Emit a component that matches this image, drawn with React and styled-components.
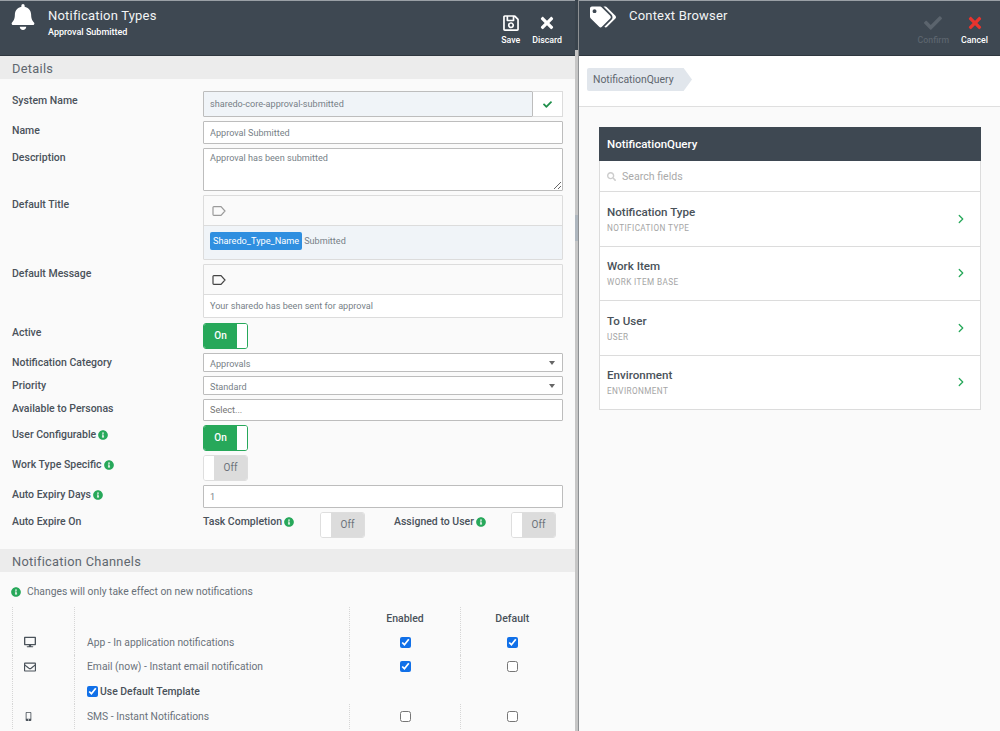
import React from 'react';
import styled, { createGlobalStyle } from 'styled-components';
import { FaBell, FaTags, FaRegSave, FaTimes, FaCheck, FaInfoCircle, FaDesktop, FaRegEnvelope, FaMobileAlt, FaSearch } from 'react-icons/fa';
import { ChevronRight } from 'lucide-react';

const GlobalStyle = createGlobalStyle`
  html, body {
    margin: 0;
    padding: 0;
    height: 731px;
    overflow: hidden;
    background: #fafafa;
    font-family: Roboto, "Liberation Sans", sans-serif;
  }
  * { box-sizing: border-box; }
`;

const Page = styled.div`
  display: flex;
  width: 1000px;
  height: 731px;
  overflow: hidden;
`;

const Pane = styled.div`
  display: flex;
  flex-direction: column;
  width: ${p => p.$width || 'auto'};
  flex: ${p => p.$grow ? 1 : 'none'};
  background: #fafafa;
`;

const Gutter = styled.div`
  display: flex;
  flex-direction: column;
  width: 4px;
  flex: none;
  background: #c6c6c6;
  border-right: 1px solid #8d9093;
`;

const GutterTop = styled.div`
  height: 50px;
  background: #39434c;
`;

const GutterThumb = styled.div`
  height: 26px;
  margin-top: 165px;
  background: #aeb6be;
`;

const Header = styled.header`
  display: flex;
  justify-content: space-between;
  height: 56px;
  flex: none;
  padding-right: ${p => p.$right}px;
  background: #3e4852;
  border-top: 1px solid #9aa0a6;
  border-bottom: 1px solid #2f373f;
  color: #fff;
`;

const HeaderLead = styled.div`
  display: flex;
`;

const HeaderIcon = styled.div`
  width: ${p => p.$width}px;
  padding: 3px 0 0 ${p => p.$left}px;
  font-size: ${p => p.$size}px;
  line-height: 1;
  flex: none;
`;

const TitleBlock = styled.div`
  padding-top: 7px;
`;

const Title = styled.div`
  font-size: 13px;
  line-height: 15px;
  letter-spacing: 0.2px;
  color: #f2f4f5;
`;

const SubTitle = styled.div`
  margin-top: 3px;
  font-size: 9px;
  line-height: 12px;
  font-weight: 500;
`;

const Actions = styled.div`
  display: flex;
  gap: ${p => p.$gap}px;
  padding-top: 13px;
`;

const Action = styled.div`
  display: flex;
  flex-direction: column;
  align-items: center;
  gap: 3px;
  font-size: 8.8px;
  line-height: 11px;
  font-weight: 500;
  color: ${p => p.$muted ? '#5b646d' : '#fff'};

  svg {
    width: 18px;
    height: 18px;
    color: ${p => p.$icon || 'inherit'};
  }
`;

const SectionBar = styled.div`
  height: 23px;
  flex: none;
  padding-left: 12px;
  background: #ececec;
  font-size: 12.8px;
  line-height: 25px;
  letter-spacing: 0.3px;
  color: #5f676f;
`;

const Form = styled.div`
  display: flex;
  flex-direction: column;
  gap: 4px;
  padding: 12px 12px 11px 12px;
`;

const Row = styled.div`
  display: flex;
  margin-top: ${p => p.$top || 0}px;
`;

const Label = styled.label`
  display: flex;
  align-items: center;
  gap: 2px;
  width: 191px;
  height: 16px;
  flex: none;
  padding-top: 4px;
  font-size: 10.5px;
  line-height: 12px;
  font-weight: 500;
  color: #4a525a;
`;

const InfoIcon = styled(FaInfoCircle)`
  width: 10px;
  height: 10px;
  color: #27a85a;
  flex: none;
`;

const Control = styled.div`
  display: flex;
  flex: 1;
`;

const TextInput = styled.input`
  display: block;
  width: 100%;
  height: ${p => p.$height || 23}px;
  padding: 0 6px;
  border: 1px solid #bdbdbd;
  border-radius: 1px;
  background: ${p => p.$tint ? '#f0f4f8' : '#fff'};
  font: 9.1px Roboto, sans-serif;
  color: #777f87;
  outline: none;
`;

const CheckAddon = styled.div`
  display: flex;
  align-items: center;
  justify-content: center;
  width: 30px;
  flex: none;
  border: 1px solid #dcdcdc;
  border-left: 0;
  background: #fff;
  color: #1f8f4b;
  font-size: 9px;
`;

const TextArea = styled.textarea`
  display: block;
  width: 100%;
  height: 43px;
  padding: 4px 6px;
  border: 1px solid #bdbdbd;
  border-radius: 1px;
  background: #fff;
  font: 9.1px Roboto, sans-serif;
  color: #777f87;
  outline: none;
`;

const Editor = styled.div`
  width: 100%;
  border: 1px solid #dcdcdc;
  border-radius: 1px;
  background: #fff;
`;

const EditorBar = styled.div`
  display: flex;
  align-items: center;
  height: 30px;
  padding-left: 8px;
  background: #fafafa;
  border-bottom: 1px solid #dcdcdc;
  color: ${p => p.$dim ? '#9a9a9a' : '#444'};
`;

const EditorBody = styled.div`
  display: flex;
  align-items: ${p => p.$center ? 'center' : 'flex-start'};
  gap: 2px;
  height: ${p => p.$height}px;
  padding: ${p => p.$center ? '0 6px' : '6px 6px 0'};
  background: ${p => p.$tint ? '#f0f4f8' : '#fff'};
  font-size: 9.1px;
  line-height: 18px;
  color: #777f87;
`;

const Token = styled.span`
  padding: 0 3px;
  height: 18px;
  border-radius: 2px;
  background: #2f8fe0;
  color: #fff;
  font-size: 9.2px;
`;

const Toggle = styled.div`
  display: flex;
  flex-direction: ${p => p.$on ? 'row' : 'row-reverse'};
  width: 45px;
  height: 26px;
  flex: none;
  border: 1px solid ${p => p.$on ? '#27a85a' : '#dedede'};
  border-radius: 3px;
  overflow: hidden;
  background: #fff;
`;

const ToggleFace = styled.div`
  flex: 1;
  text-align: center;
  font-size: 10px;
  line-height: 24px;
  font-weight: ${p => p.$on ? 500 : 400};
  background: ${p => p.$on ? '#27a85a' : '#dcdcdc'};
  color: ${p => p.$on ? '#fff' : '#6b7279'};
`;

const ToggleKnob = styled.div`
  width: 10px;
  background: #fff;
`;

const SelectBox = styled.div`
  position: relative;
  width: 100%;
  height: 19px;
  padding-left: 6px;
  border: 1px solid #bdbdbd;
  border-radius: 1px;
  background: #fff;
  font-size: 9.1px;
  line-height: 20px;
  color: #777f87;

  &::after {
    content: '';
    position: absolute;
    top: 7px;
    right: 7px;
    border-left: 3px solid transparent;
    border-right: 3px solid transparent;
    border-top: 4px solid #666;
  }
`;

const ExpireGroups = styled.div`
  display: flex;
  gap: 29px;
`;

const ExpireGroup = styled.div`
  display: flex;
  justify-content: space-between;
  width: 162px;
`;

const ExpireLabel = styled(Label)`
  width: auto;
`;

const Hint = styled.div`
  display: flex;
  align-items: center;
  gap: 6px;
  padding: 13px 0 9px 11px;
  font-size: 10.3px;
  line-height: 13px;
  color: #687078;
`;

const Table = styled.table`
  width: 551px;
  margin-left: 12px;
  border-collapse: collapse;
  table-layout: fixed;
`;

const Cell = styled.td`
  height: ${p => p.$height || 24.5}px;
  padding: 0;
  border-left: 1px dotted #d6d6d6;
  font-size: 10.3px;
  color: #6a727a;
  text-align: ${p => p.$center ? 'center' : 'left'};
  padding-left: ${p => p.$pad || 0}px;
  vertical-align: middle;

  svg {
    display: block;
    color: #4b535b;
  }

  input {
    display: block;
    margin: 0 auto;
    width: 11px;
    height: 11px;
    accent-color: #1170e8;
  }
`;

const HeadCell = styled(Cell).attrs({ as: 'th' })`
  font-size: 10.5px;
  font-weight: 500;
  color: #4a525a;
`;

const TemplateCheck = styled.label`
  display: flex;
  align-items: center;
  gap: 2px;
  font-size: 10.4px;
  font-weight: 500;
  color: #4a525a;

  input {
    margin: 0;
  }
`;

const Crumbs = styled.div`
  height: 51px;
  flex: none;
  padding: 12px 0 0 8px;
  background: #fff;
  border-bottom: 1px solid #dfdfdf;
`;

const Crumb = styled.div`
  width: 105px;
  height: 23px;
  padding-left: 6px;
  background: #e1e6ec;
  border-radius: 2px 0 0 2px;
  clip-path: polygon(0 0, 92% 0, 100% 50%, 92% 100%, 0 100%);
  font-size: 10.4px;
  line-height: 23px;
  color: #5f676f;
`;

const Card = styled.div`
  width: 382px;
  margin: 20px 0 0 20px;
  border: 1px solid #dcdcdc;
  background: #fff;
`;

const CardHead = styled.div`
  height: 34px;
  margin: -1px -1px 0;
  padding-left: 8px;
  background: #3e4852;
  color: #fff;
  font-size: 11.5px;
  font-weight: 500;
  line-height: 35px;
`;

const Search = styled.div`
  display: flex;
  align-items: center;
  gap: 6px;
  height: 31px;
  padding-left: 7px;
  border-bottom: 1px solid #dcdcdc;
  font-size: 10.6px;
  color: #a9a9a9;

  svg {
    width: 9px;
    height: 9px;
    color: #cdcdcd;
  }
`;

const Field = styled.div`
  display: flex;
  align-items: center;
  justify-content: space-between;
  height: 54.5px;
  padding: 0 12px 0 7px;
  border-top: 1px solid ${p => p.$first ? 'transparent' : '#dcdcdc'};
  margin-top: ${p => p.$first ? '-1px' : 0};

  svg {
    color: #27a85a;
  }
`;

const FieldName = styled.div`
  font-size: 11.6px;
  line-height: 14px;
  font-weight: 500;
  color: #4a525a;
`;

const FieldType = styled.div`
  margin-top: 4px;
  font-size: 8.2px;
  line-height: 11px;
  letter-spacing: 0.4px;
  color: #a5a5a5;
`;

const FieldText = styled.div`
  padding-top: 1px;
`;

const TagIcon = () => (
  <svg width="14" height="10" viewBox="0 0 14 10" fill="none" stroke="currentColor" strokeWidth="1.2">
    <path d="M1 1.5 a0.8 0.8 0 0 1 .8-.8 H9 L13 5 L9 9.3 H1.8 a0.8 0.8 0 0 1-.8-.8 Z" />
  </svg>
);

const fields = [
  ['Notification Type', 'NOTIFICATION TYPE'],
  ['Work Item', 'WORK ITEM BASE'],
  ['To User', 'USER'],
  ['Environment', 'ENVIRONMENT'],
];

const OnOff = ({ on }) => (
  <Toggle $on={on}>
    <ToggleFace $on={on}>{on ? 'On' : 'Off'}</ToggleFace>
    <ToggleKnob />
  </Toggle>
);

const Tick = ({ on }) => <input type="checkbox" checked={!!on} readOnly />;

function App() {
  return (
    <Page>
      <GlobalStyle />
      <Pane $width="575px">
        <Header $right={13}>
          <HeaderLead>
            <HeaderIcon $width={48} $left={10} $size={26}><FaBell /></HeaderIcon>
            <TitleBlock>
              <Title>Notification Types</Title>
              <SubTitle>Approval Submitted</SubTitle>
            </TitleBlock>
          </HeaderLead>
          <Actions $gap={12}>
            <Action><FaRegSave />Save</Action>
            <Action><FaTimes />Discard</Action>
          </Actions>
        </Header>
        <SectionBar>Details</SectionBar>
        <Form>
          <Row>
            <Label>System Name</Label>
            <Control>
              <TextInput $height={26} $tint readOnly value="sharedo-core-approval-submitted" />
              <CheckAddon><FaCheck /></CheckAddon>
            </Control>
          </Row>
          <Row>
            <Label>Name</Label>
            <Control><TextInput readOnly value="Approval Submitted" /></Control>
          </Row>
          <Row>
            <Label>Description</Label>
            <Control><TextArea readOnly value="Approval has been submitted" /></Control>
          </Row>
          <Row>
            <Label>Default Title</Label>
            <Control>
              <Editor>
                <EditorBar $dim><TagIcon /></EditorBar>
                <EditorBody $tint $height={33}>
                  <Token>Sharedo_Type_Name</Token> Submitted
                </EditorBody>
              </Editor>
            </Control>
          </Row>
          <Row>
            <Label>Default Message</Label>
            <Control>
              <Editor>
                <EditorBar><TagIcon /></EditorBar>
                <EditorBody $center $height={22}>Your sharedo has been sent for approval</EditorBody>
              </Editor>
            </Control>
          </Row>
          <Row $top={1}>
            <Label>Active</Label>
            <OnOff on />
          </Row>
          <Row>
            <Label>Notification Category</Label>
            <Control><SelectBox>Approvals</SelectBox></Control>
          </Row>
          <Row>
            <Label>Priority</Label>
            <Control><SelectBox>Standard</SelectBox></Control>
          </Row>
          <Row>
            <Label>Available to Personas</Label>
            <Control><TextInput $height={22} placeholder="Select..." readOnly /></Control>
          </Row>
          <Row>
            <Label>User Configurable <InfoIcon /></Label>
            <OnOff on />
          </Row>
          <Row>
            <Label>Work Type Specific <InfoIcon /></Label>
            <OnOff />
          </Row>
          <Row>
            <Label>Auto Expiry Days <InfoIcon /></Label>
            <Control><TextInput readOnly value="1" /></Control>
          </Row>
          <Row>
            <Label>Auto Expire On</Label>
            <ExpireGroups>
              <ExpireGroup>
                <ExpireLabel>Task Completion <InfoIcon /></ExpireLabel>
                <OnOff />
              </ExpireGroup>
              <ExpireGroup>
                <ExpireLabel>Assigned to User <InfoIcon /></ExpireLabel>
                <OnOff />
              </ExpireGroup>
            </ExpireGroups>
          </Row>
        </Form>
        <SectionBar>Notification Channels</SectionBar>
        <Hint><InfoIcon />Changes will only take effect on new notifications</Hint>
        <Table>
          <colgroup>
            <col width="62" />
            <col width="275" />
            <col width="111" />
            <col width="103" />
          </colgroup>
          <tbody>
            <tr>
              <HeadCell $height={23} />
              <HeadCell $height={23} />
              <HeadCell $height={23} $center>Enabled</HeadCell>
              <HeadCell $height={23} $center>Default</HeadCell>
            </tr>
            <tr>
              <Cell $pad={11}><FaDesktop size={12} /></Cell>
              <Cell $pad={12}>App - In application notifications</Cell>
              <Cell $center><Tick on /></Cell>
              <Cell $center><Tick on /></Cell>
            </tr>
            <tr>
              <Cell $pad={11}><FaRegEnvelope size={12} /></Cell>
              <Cell $pad={12}>Email (now) - Instant email notification</Cell>
              <Cell $center><Tick on /></Cell>
              <Cell $center><Tick /></Cell>
            </tr>
            <tr>
              <Cell $height={25} />
              <Cell $height={25} colSpan={3} $pad={12}>
                <TemplateCheck><Tick on />Use Default Template</TemplateCheck>
              </Cell>
            </tr>
            <tr>
              <Cell $pad={11}><FaMobileAlt size={9} /></Cell>
              <Cell $pad={12}>SMS - Instant Notifications</Cell>
              <Cell $center><Tick /></Cell>
              <Cell $center><Tick /></Cell>
            </tr>
          </tbody>
        </Table>
      </Pane>
      <Gutter>
        <GutterTop />
        <GutterThumb />
      </Gutter>
      <Pane $grow>
        <Header $right={12}>
          <HeaderLead>
            <HeaderIcon $width={50} $left={11} $size={26}><FaTags /></HeaderIcon>
            <TitleBlock>
              <Title>Context Browser</Title>
            </TitleBlock>
          </HeaderLead>
          <Actions $gap={12}>
            <Action $muted><FaCheck />Confirm</Action>
            <Action $icon="#e8342e"><FaTimes />Cancel</Action>
          </Actions>
        </Header>
        <Crumbs><Crumb>NotificationQuery</Crumb></Crumbs>
        <Card>
          <CardHead>NotificationQuery</CardHead>
          <Search><FaSearch />Search fields</Search>
          {fields.map(([name, type], i) => (
            <Field key={name} $first={i === 0}>
              <FieldText>
                <FieldName>{name}</FieldName>
                <FieldType>{type}</FieldType>
              </FieldText>
              <ChevronRight size={14} strokeWidth={2.2} />
            </Field>
          ))}
        </Card>
      </Pane>
    </Page>
  );
}

export default App;
